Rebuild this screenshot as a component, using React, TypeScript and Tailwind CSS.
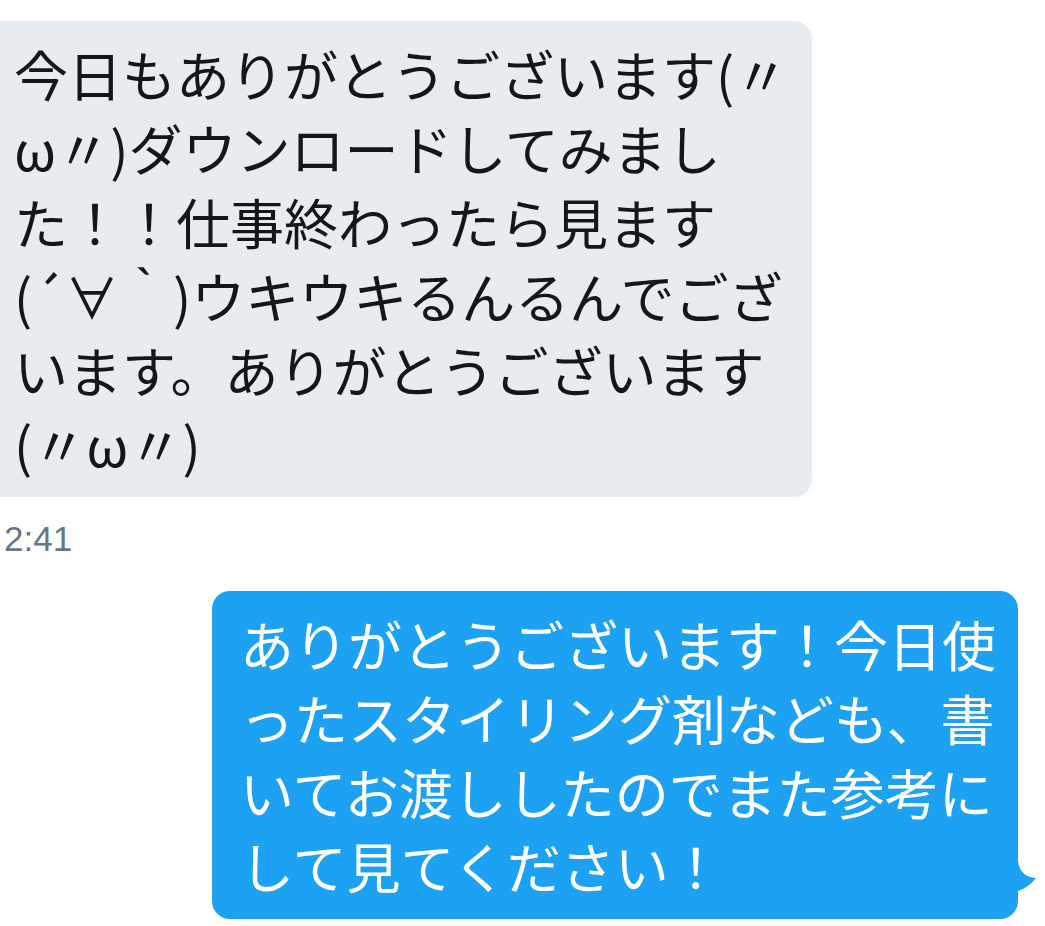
const cjk = { fontFamily: '"Noto Sans CJK JP", "Noto Sans", sans-serif' }

const received = [
  '今日もありがとうございます(〃',
  'ω〃)ダウンロードしてみまし',
  'た！！仕事終わったら見ます',
  '(´∀｀)ウキウキるんるんでござ',
  'います。ありがとうございます',
  '(〃ω〃)',
]

const sent = [
  'ありがとうございます！今日使',
  'ったスタイリング剤なども、書',
  'いてお渡ししたのでまた参考に',
  'して見てください！',
]

function Tail() {
  return (
    <svg
      className="absolute left-[802px] top-[270px]"
      width="24"
      height="30"
      viewBox="0 0 24 30"
    >
      <path d="M0 0 L4 0 Q6 16 22 17 Q14 27 4 30 L0 30 Z" fill="#1da1f2" />
    </svg>
  )
}

export default function App() {
  return (
    <div className="w-[1045px] h-[926px] bg-white overflow-hidden pt-[21px]" style={cjk}>
      {/* received message */}
      <div className="w-[812px] bg-[#e6ecf0] rounded-r-[18px] pl-[14px] py-[16px] text-[54px] leading-[74px] text-[#14171a]">
        {received.map((line, i) => (
          <div key={i} className="whitespace-nowrap">
            {line}
          </div>
        ))}
      </div>
      <div
        className="mt-[22px] pl-[4px] text-[35px] leading-[40px] text-[#657786]"
        style={{ fontFamily: '"Liberation Sans", Arial, sans-serif' }}
      >
        2:41
      </div>

      {/* sent message */}
      <div className="mt-[32px] flex justify-end pr-[27px]">
        <div className="relative w-[806px] bg-[#1da1f2] rounded-[18px] pl-[28px] py-[16px] text-[54px] leading-[74px] text-white">
          {sent.map((line, i) => (
            <div key={i} className="whitespace-nowrap">
              {line}
            </div>
          ))}
          <Tail />
        </div>
      </div>
    </div>
  )
}
